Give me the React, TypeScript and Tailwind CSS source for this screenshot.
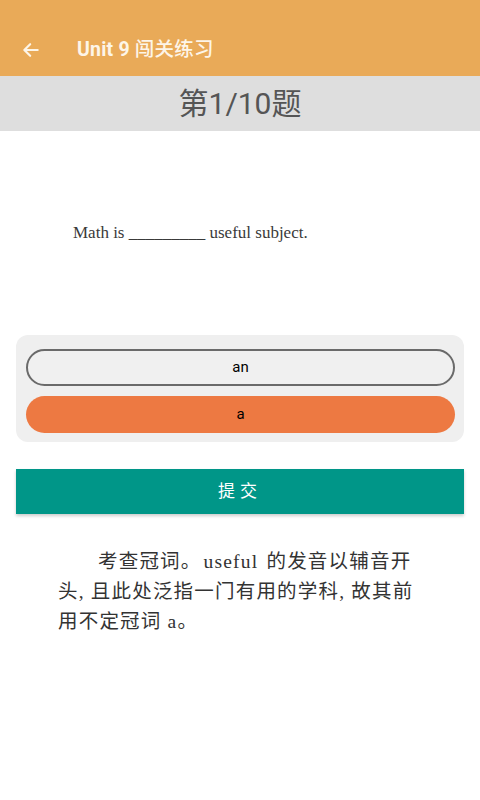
import React from 'react';

const options = [
  { label: 'an', selected: false },
  { label: 'a', selected: true },
];

const App: React.FC = () => {
  return (
    <div className="min-h-[800px] w-[480px] bg-white font-['Roboto','Noto_Sans_CJK_SC',sans-serif]">
      {/* header */}
      <div className="flex h-[76px] items-center bg-[#e9aa58] pt-6 shadow-[0_1px_3px_rgba(0,0,0,0.25)]">
        <div className="flex w-[58px] justify-center pl-1">
          <svg width="20" height="20" viewBox="0 0 24 24" fill="none" stroke="#fdf5e8" strokeWidth="2.6" strokeLinecap="round" strokeLinejoin="round">
            <path d="M20 12H5" />
            <path d="M11 5l-7 7 7 7" />
          </svg>
        </div>
        <span className="ml-[19px] text-[19.5px] font-bold tracking-[0.2px] text-[#fdf5e8]">
          Unit 9 <span className="font-medium">闯关练习</span>
        </span>
      </div>

      {/* progress */}
      <div className="flex h-[55px] items-center justify-center bg-[#dedede]">
        <span className="text-[30px] text-[#555555]">第1/10题</span>
      </div>

      {/* question */}
      <div className="h-[204px] pl-[73px] pt-[89px]">
        <p className="font-['Liberation_Serif',serif] text-[17px] text-[#3a3a3a]">
          Math is _________ useful subject.
        </p>
      </div>

      {/* options */}
      <div className="mx-4 flex flex-col gap-[10px] rounded-xl bg-[#efefef] pb-[9px] pl-[10px] pr-[9px] pt-[14px]">
        {options.map((o) => (
          <div
            key={o.label}
            className={
              o.selected
                ? 'flex h-[37px] items-center justify-center rounded-full bg-[#ed7942] text-[15px] text-black'
                : 'flex h-[37px] items-center justify-center rounded-full border-2 border-[#6a6a6a] bg-[#f0f0f0] text-[15px] text-black'
            }
          >
            {o.label}
          </div>
        ))}
      </div>

      {/* submit */}
      <div className="mx-4 mt-[27px] flex h-[45px] items-center justify-center bg-[#009688] shadow-[0_2px_3px_rgba(0,0,0,0.2)]">
        <span className="text-[17px] tracking-[5px] text-white">提交</span>
      </div>

      {/* explanation */}
      <div className="pl-[58px] pt-[33px] font-['Liberation_Serif','Noto_Sans_CJK_SC',serif] text-[19.5px] leading-[30px] tracking-[1.2px] text-[#333333]">
        <p className="indent-[40px]">
          考查冠词。<span className="mx-[2px]">useful</span> 的发音以辅音开
        </p>
        <p>
          头<span className="mr-[6px]">,</span>且此处泛指一门有用的学科<span className="mr-[6px]">,</span>故其前
        </p>
        <p>用不定冠词 a。</p>
      </div>
    </div>
  );
};

export default App;
